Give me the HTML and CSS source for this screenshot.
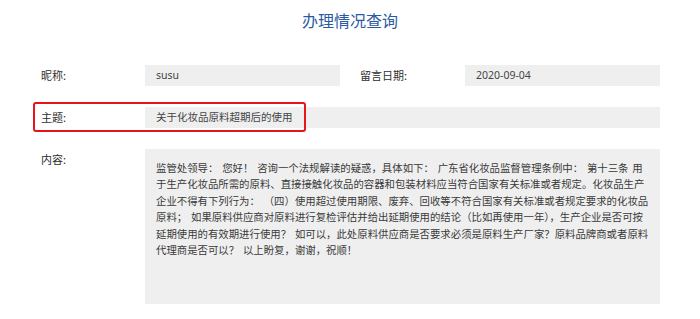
FILE: index.html
```html
<!DOCTYPE html>
<html lang="zh-CN">
<head>
<meta charset="utf-8">
<title>办理情况查询</title>
<link rel="stylesheet" href="styles.css">
</head>
<body>
<div class="page">
  <h1 class="title">办理情况查询</h1>
  <div class="form">
    <div class="row">
      <div class="label">昵称:</div>
      <div class="field short">susu</div>
      <div class="label label-right">留言日期:</div>
      <div class="field short">2020-09-04</div>
    </div>
    <div class="row">
      <div class="label">主题:</div>
      <div class="field wide">关于化妆品原料超期后的使用</div>
    </div>
    <div class="row">
      <div class="label">内容:</div>
      <div class="field wide area">监管处领导： 您好！ 咨询一个法规解读的疑惑，具体如下： 广东省化妆品监督管理条例中： 第十三条 用于生产化妆品所需的原料、直接接触化妆品的容器和包装材料应当符合国家有关标准或者规定。化妆品生产企业不得有下列行为： （四）使用超过使用期限、废弃、回收等不符合国家有关标准或者规定要求的化妆品原料； 如果原料供应商对原料进行复检评估并给出延期使用的结论（比如再使用一年），生产企业是否可按延期使用的有效期进行使用？ 如可以，此处原料供应商是否要求必须是原料生产厂家？原料品牌商或者原料代理商是否可以？ 以上盼复，谢谢，祝顺！</div>
    </div>
  </div>
  <div class="highlight"></div>
</div>
</body>
</html>
```

FILE: styles.css
```css
* { box-sizing: border-box; }
html, body {
  margin: 0;
  padding: 0;
  background: #ffffff;
}
body {
  font-family: "Noto Sans", "Noto Sans CJK SC", sans-serif;
  color: #333333;
  font-size: 10.5px;
}
.page {
  position: relative;
  width: 700px;
  height: 319px;
  overflow: hidden;
}
.title {
  margin: 0;
  padding-top: 9px;
  height: 65px;
  text-align: center;
  font-weight: normal;
  font-size: 16px;
  line-height: 22px;
  color: #2b5aa5;
  font-family: "Noto Sans CJK SC", sans-serif;
}
.form {
  display: flex;
  flex-direction: column;
  gap: 21px;
  padding-left: 41px;
}
.row {
  display: flex;
  align-items: flex-start;
}
.label {
  width: 104px;
  height: 21px;
  line-height: 21px;
  font-size: 11px;
  color: #2e2e2e;
  font-family: "Noto Sans CJK SC", sans-serif;
}
.label-right {
  width: 125px;
  padding-left: 20px;
}
.field {
  background: #efefef;
  height: 21px;
  line-height: 21px;
  padding-left: 11px;
  color: #444444;
}
.short { width: 195px; }
.wide { width: 515px; }
.area {
  height: 155px;
  padding: 11px 9px 0 11px;
  font-size: 10.4px;
  line-height: 16.4px;
  word-spacing: 1.5px;
  color: #3a3a3a;
  font-family: "Noto Sans CJK SC", sans-serif;
}
.highlight {
  position: absolute;
  left: 33px;
  top: 102px;
  width: 273px;
  height: 30px;
  border: 2px solid #e8141b;
  border-radius: 3px;
}
```
